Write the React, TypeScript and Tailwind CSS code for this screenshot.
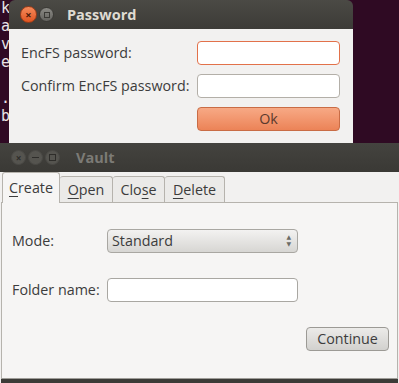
import React from 'react'

const ui = { fontFamily: '"Open Sans", "DejaVu Sans", sans-serif' }

function TermStrip() {
  const lines = ['k', 'a', 'v', 'e', '', '.', 'b']
  return (
    <div
      className="w-[9px] shrink-0 overflow-hidden text-[15px] leading-[18px] text-[#e8e4e6] mt-[-1px]"
      style={{ fontFamily: '"DejaVu Sans Mono", monospace' }}
    >
      {lines.map((l, i) => (
        <div key={i} className="h-[18px] pl-px">
          {l || '\u00a0'}
        </div>
      ))}
    </div>
  )
}

function PasswordWindow() {
  return (
    <div className="w-[344px] h-[143px] shrink-0 flex flex-col rounded-t-[6px] overflow-hidden" style={ui}>
      <div className="h-[29px] flex items-center bg-gradient-to-b from-[#4b4a45] to-[#3c3b37]">
        <div className="ml-[11px] w-[17px] h-[17px] rounded-full bg-gradient-to-b from-[#f58a5a] to-[#e0541f] border border-[#9c3c18] flex items-center justify-center text-[#4a1a0a] text-[11px] leading-none font-bold">
          ×
        </div>
        <div className="ml-[2px] w-[15px] h-[15px] rounded-full bg-gradient-to-b from-[#8a8984] to-[#64635f] border border-[#3a3935] flex items-center justify-center">
          <div className="w-[6px] h-[6px] border border-[#3a3935]" />
        </div>
        <div className="ml-[13px] text-[14.5px] font-bold text-[#dfdbd2]">Password</div>
      </div>
      <div className="flex-1 bg-[#f2f1f0] pl-[12px] pr-[13px] pt-[12px] flex flex-col gap-[9px] text-[14.3px] text-[#3c3c3c]">
        <div className="flex items-center">
          <div className="w-[176px]">EncFS password:</div>
          <div className="w-[143px] h-[24px] bg-white rounded-[4px] border border-[#e2714a]" />
        </div>
        <div className="flex items-center">
          <div className="w-[176px]">Confirm EncFS password:</div>
          <div className="w-[143px] h-[24px] bg-white rounded-[4px] border border-[#b3afa8]" />
        </div>
        <div className="flex items-center">
          <div className="w-[176px]" />
          <div className="w-[143px] h-[24px] rounded-[4px] border border-[#c96c45] bg-gradient-to-b from-[#f7a985] to-[#ec8357] flex items-center justify-center text-[#5b3a2e]">
            Ok
          </div>
        </div>
      </div>
    </div>
  )
}

function Tab({ label, u, w, active }: { label: string; u: number; w: string; active?: boolean }) {
  const chars = label.split('')
  return (
    <div
      className={
        (active
          ? 'h-[31px] flex items-center border border-b-0 border-[#b6b3ad] rounded-t-[3px] bg-[#f6f5f4] relative z-10 -mb-px'
          : 'h-[26px] flex items-center border border-b-0 border-l-0 border-[#b6b3ad] rounded-t-[3px] bg-[#ebeae8] mt-auto') +
        ' justify-center ' +
        w
      }
    >
      {chars.map((c, i) => (
        <span key={i} className={i === u ? 'underline underline-offset-[3px]' : ''}>
          {c}
        </span>
      ))}
    </div>
  )
}

function VaultWindow() {
  return (
    <div className="flex-1 flex flex-col" style={ui}>
      <div className="h-[29px] shrink-0 flex items-center bg-gradient-to-b from-[#44433f] to-[#3a3935]">
        <div className="ml-[11px] w-[15px] h-[15px] rounded-full bg-[#55544f] border border-[#4a4945] flex items-center justify-center text-[#2e2d2a] text-[10px] leading-none font-bold">
          ×
        </div>
        <div className="ml-[2px] w-[15px] h-[15px] rounded-full bg-[#55544f] border border-[#4a4945] flex items-center justify-center">
          <div className="w-[7px] h-px bg-[#2e2d2a]" />
        </div>
        <div className="ml-[2px] w-[15px] h-[15px] rounded-full bg-[#55544f] border border-[#4a4945] flex items-center justify-center">
          <div className="w-[7px] h-[7px] border border-[#2e2d2a]" />
        </div>
        <div className="ml-[16px] text-[14.5px] font-bold text-[#7c7b76]">Vault</div>
      </div>
      <div className="flex-1 bg-[#f2f1f0] flex flex-col pl-[1px] pr-[1px] text-[14.3px] text-[#3c3c3c]">
        <div className="h-[30px] flex pl-[1px] items-end">
          <Tab label="Create" u={0} w="w-[58px]" active />
          <Tab label="Open" u={0} w="w-[53px]" />
          <Tab label="Close" u={3} w="w-[52px]" />
          <Tab label="Delete" u={0} w="w-[60px]" />
        </div>
        <div className="h-[177px] bg-[#f6f5f4] border border-[#b6b3ad] border-b-[#9f9d98] flex flex-col pl-[10px]">
          <div className="mt-[26px] flex items-center">
            <div className="w-[95px]">Mode:</div>
            <div className="w-[191px] h-[24px] rounded-[4px] border border-[#a9a7a2] bg-gradient-to-b from-[#f3f2f1] to-[#d7d6d3] flex items-center pl-[4px] pr-[6px]">
              <span className="flex-1">Standard</span>
              <span className="flex flex-col items-center text-[6px] leading-[7px] text-[#6c6b67]">
                <span>▲</span>
                <span>▼</span>
              </span>
            </div>
          </div>
          <div className="mt-[25px] flex items-center">
            <div className="w-[95px]">Folder name:</div>
            <div className="w-[191px] h-[24px] rounded-[4px] border border-[#a9a7a2] bg-white" />
          </div>
          <div className="mt-[25px] flex justify-end pr-[8px]">
            <div className="w-[83px] h-[24px] rounded-[4px] border border-[#9c9a95] bg-gradient-to-b from-[#ecebe9] to-[#d2d1ce] flex items-center justify-center">
              Continue
            </div>
          </div>
        </div>
        <div className="h-[4px] bg-[#3c3b37]" />
      </div>
    </div>
  )
}

export default function App() {
  return (
    <div className="w-[399px] h-[383px] overflow-hidden bg-[#300a24] flex flex-col">
      <div className="flex h-[143px] shrink-0">
        <TermStrip />
        <PasswordWindow />
        <div className="flex-1 bg-[#2f0a23]" />
      </div>
      <VaultWindow />
    </div>
  )
}
